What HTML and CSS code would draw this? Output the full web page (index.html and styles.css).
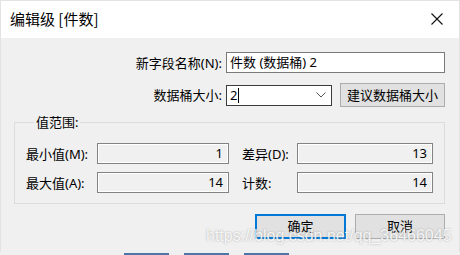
FILE: index.html
```html
<!DOCTYPE html>
<html lang="zh-CN">
<head>
    <meta charset="UTF-8">
    <title>编辑级 [件数]</title>
    <link rel="stylesheet" href="styles.css">
</head>
<body>
    <div class="dialog">
        <div class="titlebar">
            <div class="title">编辑级 [件数]</div>
            <svg class="close" width="12" height="12" viewBox="0 0 12 12">
                <path d="M0.5 0.5 L11.5 11.5 M11.5 0.5 L0.5 11.5" stroke="#111" stroke-width="1.1" fill="none"/>
            </svg>
        </div>

        <div class="content">
            <div class="form-row">
                <label class="row-label">新字段名称(N):</label>
                <div class="text-input">件数 (数据桶) 2</div>
            </div>
            <div class="form-row second">
                <label class="row-label">数据桶大小:</label>
                <div class="row-controls">
                    <div class="combo">
                        <span class="combo-value">2</span><span class="caret"></span>
                        <svg class="chevron" width="10" height="6" viewBox="0 0 10 6">
                            <path d="M0.5 0.5 L5 5 L9.5 0.5" stroke="#555" stroke-width="1" fill="none"/>
                        </svg>
                    </div>
                    <button class="btn suggest">建议数据桶大小</button>
                </div>
            </div>

            <fieldset class="range-group">
                <legend>值范围:</legend>
                <div class="range-grid">
                    <span class="range-label">最小值(M):</span>
                    <div class="readonly">1</div>
                    <span class="range-label right">差异(D):</span>
                    <div class="readonly">13</div>
                    <span class="range-label">最大值(A):</span>
                    <div class="readonly">14</div>
                    <span class="range-label right">计数:</span>
                    <div class="readonly">14</div>
                </div>
            </fieldset>

            <div class="actions">
                <button class="btn primary">确定</button>
                <button class="btn">取消</button>
            </div>
        </div>

        <div class="watermark">https://blog.csdn.net/qq_36466045</div>
    </div>

    <div class="behind">
        <span></span><span></span><span></span>
    </div>
</body>
</html>
```

FILE: styles.css
```css
* {
    box-sizing: border-box;
    margin: 0;
    padding: 0;
}

body {
    background: #f0f0f0;
    width: 460px;
    height: 255px;
    overflow: hidden;
    font-family: "Noto Sans", "Noto Sans CJK SC", sans-serif;
    font-size: 13px;
    color: #000;
}

.dialog {
    position: relative;
    height: 252px;
    border: 1px solid #e3e3e3;
    border-bottom: none;
    background: #f0f0f0;
}

/* Title bar */
.titlebar {
    height: 37px;
    background: #fff;
    display: flex;
    align-items: center;
    justify-content: space-between;
    padding: 0 16px 0 9px;
}

.title {
    font-family: "Noto Sans CJK SC", sans-serif;
    font-size: 15px;
    line-height: 20px;
    margin-top: -2px;
}

.close {
    margin-top: -2px;
}

/* Form */
.content {
    padding-top: 14px;
}

.form-row {
    display: grid;
    grid-template-columns: 221px 219px;
    column-gap: 4px;
    align-items: center;
    height: 21px;
}

.form-row.second {
    margin-top: 10px;
    height: 23px;
}

.row-label {
    text-align: right;
    line-height: 18px;
    white-space: nowrap;
}

.text-input {
    height: 21px;
    background: #fff;
    border: 1px solid #7a7a7a;
    padding-left: 3px;
    line-height: 19px;
}

.row-controls {
    display: flex;
    align-items: center;
    gap: 8px;
}

.combo {
    width: 106px;
    height: 21px;
    background: #fff;
    border: 1px solid #3c3c3c;
    display: flex;
    align-items: center;
    padding-left: 3px;
}

.combo-value {
    line-height: 19px;
}

.caret {
    width: 1px;
    height: 15px;
    background: #000;
    margin-left: 1px;
}

.chevron {
    margin-left: auto;
    margin-right: 5px;
}

.btn {
    font-family: "Noto Sans", "Noto Sans CJK SC", sans-serif;
    font-size: 13px;
    color: #000;
    background: #e1e1e1;
    border: 1px solid #adadad;
    height: 25px;
    line-height: 21px;
}

.suggest {
    width: 105px;
    height: 24px;
}

/* Range group */
.range-group {
    margin: 7px 14px 0 13px;
    border: 1px solid #dcdcdc;
    padding: 12px 0 10px 11px;
}

.range-group legend {
    margin-left: 8px;
    padding: 0 2px;
    line-height: 18px;
}

.range-grid {
    display: grid;
    grid-template-columns: 71px 132px 68px 136px;
    row-gap: 8px;
    align-items: center;
}

.range-label {
    white-space: nowrap;
    line-height: 18px;
}

.range-label.right {
    padding-left: 13px;
}

.readonly {
    height: 21px;
    background: #f0f0f0;
    border: 1px solid #838383;
    box-shadow: inset 1px 1px 0 #fff, inset -1px -1px 0 #fff;
    text-align: right;
    padding-right: 5px;
    line-height: 19px;
}

/* Buttons */
.actions {
    display: flex;
    justify-content: flex-end;
    gap: 9px;
    margin-top: 10px;
    padding-right: 14px;
}

.actions .btn {
    width: 90px;
}

.actions .primary {
    width: 91px;
    border: 2px solid #0078d7;
    line-height: 19px;
}

.watermark {
    position: absolute;
    left: 205px;
    top: 226px;
    font-family: "Liberation Sans", sans-serif;
    font-size: 16px;
    color: rgba(255, 255, 255, 0.85);
    text-shadow: 0 0 2px rgba(120, 120, 120, 0.6);
    white-space: nowrap;
    pointer-events: none;
}

/* window behind the dialog */
.behind {
    display: flex;
    gap: 15px;
    padding-left: 124px;
    height: 3px;
    align-items: flex-end;
}

.behind span {
    width: 45px;
    height: 2px;
    background: #4f74a8;
}
```
